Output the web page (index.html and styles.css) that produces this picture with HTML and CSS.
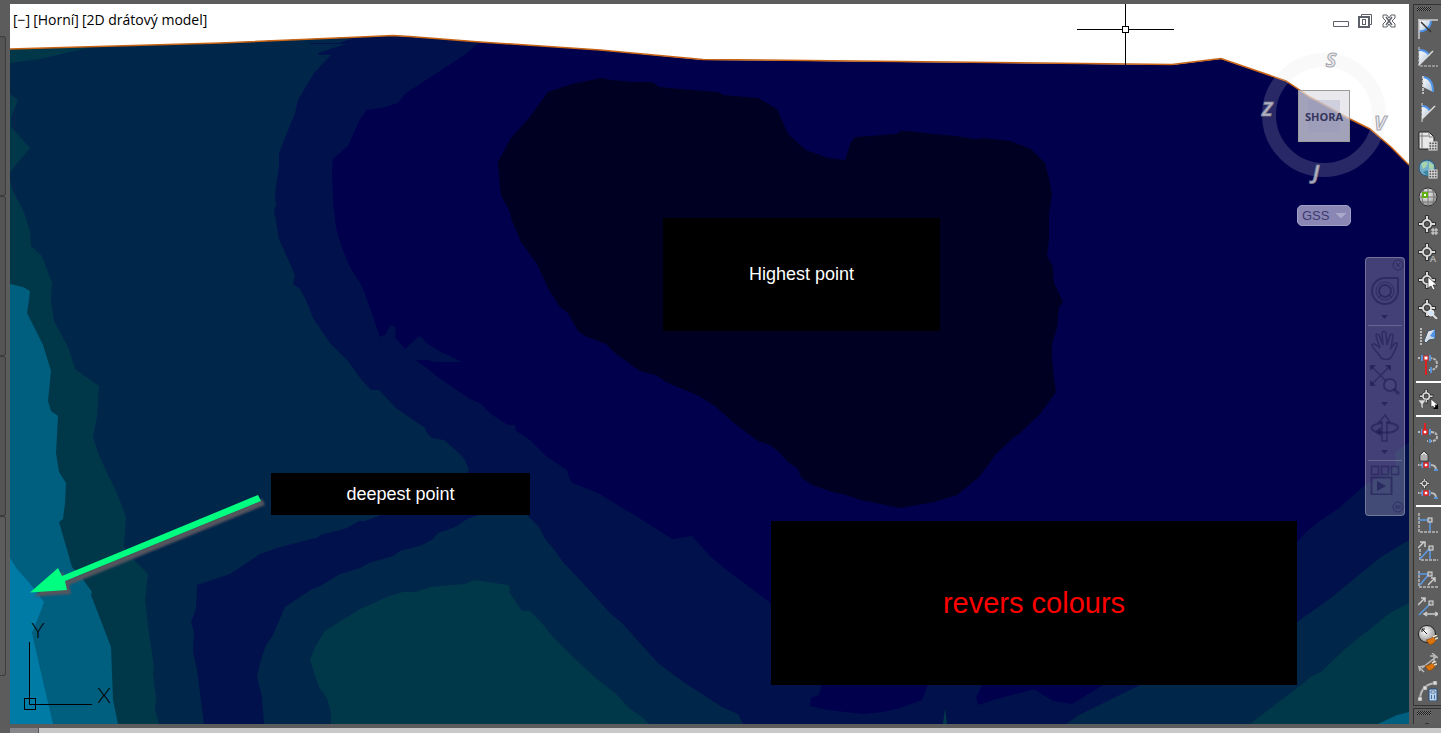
FILE: index.html
```
<!DOCTYPE html>
<html lang="cs">
<head>
    <meta charset="UTF-8">
    <meta name="viewport" content="width=device-width, initial-scale=1.0">
    <title>2D drátový model</title>
    <link rel="stylesheet" href="styles.css">
</head>
<body>
    <!-- Shared icon parts -->
    <svg class="icon-defs" aria-hidden="true">
        <defs>
            <linearGradient id="pale" x1="0" y1="0" x2="1" y2="1">
                <stop offset="0" stop-color="#ffffff"/>
                <stop offset="1" stop-color="#a9bdd6"/>
            </linearGradient>
            <radialGradient id="ball" cx=".4" cy=".35" r=".7">
                <stop offset="0" stop-color="#ffffff"/>
                <stop offset="1" stop-color="#8a8a8a"/>
            </radialGradient>
            <symbol id="target" viewBox="0 0 20 20">
                <g fill="none" stroke="#333" stroke-width="4">
                    <circle cx="9" cy="9" r="4"/>
                    <path d="M9 0v5M9 13v5M0 9h5M13 9h5"/>
                </g>
                <g fill="none" stroke="#d8d8d8" stroke-width="2">
                    <circle cx="9" cy="9" r="4"/>
                    <path d="M9 1v4M9 13v4M1 9h4M13 9h4"/>
                </g>
            </symbol>
            <symbol id="badge" viewBox="0 0 10 10">
                <rect x="1" y="1" width="8" height="8" fill="#555" stroke="#ddd"/>
                <path d="M3.7 1v8M6.3 1v8M1 3.7h8M1 6.3h8" stroke="#ddd" fill="none"/>
            </symbol>
            <symbol id="snap" viewBox="0 0 20 10">
                <path d="M0 4h4" stroke="#bbb" stroke-width="2" stroke-dasharray="1.5 1"/>
                <path d="M4.500 1v6M11.500 1v6" stroke="#5b93d8" stroke-width="2"/>
                <path d="M13 4q5 0 5 5" stroke="#bbb" stroke-width="2" fill="none"/>
                <path d="M16 9h4" stroke="#5b93d8" stroke-width="2"/>
                <rect x="6" y="2" width="4" height="4" fill="#fff" stroke="#e02020" stroke-width="1.500"/>
            </symbol>
            <symbol id="brush" viewBox="0 0 12 10">
                <path d="M0 5l4-1 3-2 3 3-2 3-4 2z" fill="#d9740f" stroke="#8a4200" stroke-width=".6"/>
                <path d="M7 2l4-2M9 4l3-1" stroke="#f0e0c0" stroke-width="1.500"/>
            </symbol>
        </defs>
    </svg>

    <main class="workspace">
        <aside class="palette">
            <div class="palette-tab"></div>
            <div class="palette-tab"></div>
            <div class="palette-tab"></div>
            <div class="palette-tab"></div>
        </aside>

        <section class="viewport">
            <svg class="map" viewBox="10 4 1399 720" preserveAspectRatio="xMinYMin slice">
                <defs>
                    <clipPath id="terrain">
                        <path d="M10 49.500L220 43L360 37L393 36L410 37L480 42L600 50L703 60L900 62L1172 65L1221 59L1286 81L1310 97L1350 119L1370 129L1391 147L1409 165V724H10z"/>
                    </clipPath>
                </defs>
                <g clip-path="url(#terrain)">
                    <rect class="depth-1" x="10" y="4" width="1399" height="720"/>
                    <path class="depth-0" d="M498 162L511 138L529 118L548 92L572 84L601 78L611 80L632 82H653L659 87L680 89L718 92L723 95L758 98L777 109L788 134L806 150L828 158L845 160L851 142L855 137L897 134L900 131H907L943 135L956 136L975 139L983 138L1010 141L1031 149L1045 163L1049 178L1052 194L1049 214V240L1047 256L1053 267L1054 283L1063 302L1059 307L1057 328L1052 344V358L1054 378L1056 392L1040 414L1019 434L1014 437L996 454L979 477L957 495L934 502L900 508L871 502L864 501L843 494L836 493L812 485L801 477L798 469L787 461L780 453L770 445L758 441L734 423L715 406L699 396L666 382L656 375L640 371L615 353L606 344L585 336L578 331L568 313L560 307L549 290L537 264L521 242L511 218L510 212L501 195L500 188z"/>
                    <path class="depth-2" d="M10 4H480V42L463 56L406 93L398 103L382 108L367 110L360 119L348 146L333 159L332 170L333 200L336 228L342 248L350 267L360 283L364 291L380 337L386 334L387 331L391 325L395 327L396 331L395 337L405 349L419 336L424 339L425 342L441 352L448 355L462 362H434L427 360H416L442 380L470 399L480 403L491 414L508 425H515L516 431L530 440L546 456L567 470L570 480L573 483L598 493L644 521L672 539L692 536L711 557L732 574L772 604L822 684L819 695L811 698L810 706L828 710L863 714L883 712L900 708L922 700L928 684H983L976 697L978 705L990 701L1034 689L1053 701L1072 704L1103 685L1297 542L1306 532L1317 523L1339 508L1365 485L1386 473L1396 465L1395 453L1409 442V724H10z"/>
                    <path class="depth-3" d="M10 4H345L352 38L340 43H310V44H346L318 53L319 55H331L314 73L298 100L295 113L279 153V167L275 193L276 205L274 210L279 239L295 275L293 284L300 289L306 300L313 318L330 343L348 361L360 378L371 390H379L396 408L425 428L427 433L432 438L444 440L460 454L465 460L469 470L466 475L420 500L381 515L365 521H359L347 528L340 530L320 535L317 538L307 540L277 548L260 554L230 574L197 585L196 609L191 622L194 632L193 652L197 670L204 724H10z"/>
                    <path class="depth-3" d="M264 724L262 697L257 677L260 663L266 645L272 637L285 607L312 589L320 586L340 574L360 568L369 563L393 556L400 551L422 545L433 539L438 533L455 527L467 519L479 515L500 505L527 515L539 527L545 539L553 548L563 562L580 580L610 613L622 623L658 663L682 681L722 707L738 714L743 724z"/>
                    <path class="depth-3" d="M1409 540L1381 557L1355 578L1331 598L1297 622L1140 685L1079 715L1066 724H1409z"/>
                    <path class="depth-4" d="M10 48L92 47L40 59L10 63zM10 94L18 100L11 117V127L30 148L10 172zM10 180L13 191L24 212L30 232L31 246L42 256L52 283L51 300L54 321L69 349L75 369L99 386L97 417L93 436L98 453L107 473L117 493L126 517L124 547L133 559L148 574L145 600L150 640L154 667L153 673L156 698L155 710L159 724H10z"/>
                    <path class="depth-4" d="M331 724V713L327 698L319 687L310 660L315 647L325 631L360 609L387 597L403 592H415L431 587L465 584L474 580L508 585L510 589L509 592L522 611H530L541 622L553 637L573 657L598 680L615 693L629 708L642 717L649 724zM943 724L945 708L947 724z"/>
                    <path class="depth-4" d="M1409 603L1390 613L1345 649L1321 672L1312 676L1297 688L1250 724H1409z"/>
                    <path class="depth-5" d="M10 284L23 287L30 291L29 300L27 313L43 345L51 371L48 401L51 411L58 416L56 453L59 472L66 483L65 503L63 519L59 522L72 567L82 578L92 592L91 595L111 647L113 700L118 724H10zM1409 712L1397 715L1378 724H1409z"/>
                    <path class="depth-6" d="M10 558L17 569L32 586L44 602L42 608L32 633L42 677L53 724H10z"/>
                </g>
                <path class="outline" d="M10 49L220 43L360 37L393 35.500L410 36.500L480 42L600 50L703 59.500L900 61.500L1172 64.500L1221 58.500L1286 81L1310 97L1350 119L1370 129L1391 147L1409 165"/>

                <!-- Crosshair -->
                <g class="crosshair">
                    <path d="M1077 29.500H1122M1129 29.500H1174M1125.500 4V26M1125.500 33V65"/>
                    <rect x="1122.500" y="26.500" width="6" height="6"/>
                </g>

                <!-- UCS axes -->
                <g class="crosshair">
                    <path d="M29.500 642V704.500H92"/>
                    <rect x="24.500" y="698.500" width="11" height="11"/>
                </g>
                <text class="axis-name" x="38" y="638">Y</text>
                <text class="axis-name" x="104" y="703">X</text>

                <path class="pointer" d="M30 592.500L58 568L62 576L258 495L261 501L65 581L67 590z"/>
            </svg>

            <div class="view-label">
                <button type="button">[−]</button><button type="button">[Horní]</button><button type="button">[2D drátový model]</button>
            </div>

            <div class="note note-highest">Highest point</div>
            <div class="note note-deepest">deepest point</div>
            <div class="note note-revers">revers colours</div>

            <div class="window-buttons">
                <button type="button" aria-label="Minimalizovat">
                    <svg width="16" height="16"><path d="M.5 8.500h15v5H.5z" fill="#fff" stroke="#5d6068"/></svg>
                </button>
                <button type="button" aria-label="Obnovit">
                    <svg width="16" height="16" fill="#fff" stroke="#5d6068"><path d="M4.500 1.500h10v10h-10z"/><path d="M2 4h10v10H2z" stroke-width="2"/><rect x="5.500" y="6.500" width="3" height="5"/></svg>
                </button>
                <button type="button" aria-label="Zavřít">
                    <svg width="16" height="16"><path d="M2 2h4l2 3 2-3h4v3l-3 3 3 3v3h-4l-2-3-2 3H2v-3l3-3-3-3z" fill="#fff" stroke="#5d6068"/><path d="M5 4l6 8M11 4l-6 8" stroke="#5d6068" stroke-width="1.500"/></svg>
                </button>
            </div>

            <div class="view-cube">
                <svg class="cube" width="128" height="130" viewBox="0 0 128 130">
                    <circle class="ring" cx="64" cy="66" r="55"/>
                    <rect class="face" x="38.500" y="41.500" width="51" height="51"/>
                    <rect class="face-inner" x="48" y="51" width="32" height="32"/>
                    <text class="face-name" x="64" y="72">SHORA</text>
                    <text class="side" x="71" y="18">S</text>
                    <text class="side" x="7" y="67">Z</text>
                    <text class="side" x="120" y="81">V</text>
                    <text class="side" x="56" y="130">J</text>
                </svg>
                <select class="ucs-select" aria-label="Souřadnicový systém">
                    <option>GSS</option>
                </select>
            </div>

            <nav class="nav-bar">
                <button type="button" class="nav-corner" aria-label="Zavřít panel">
                    <svg width="12" height="12"><circle cx="6" cy="6" r="5"/><path d="M4 4l4 4M8 4l-4 4"/></svg>
                </button>
                <button type="button" class="nav-wheel" aria-label="Navigační kolo">
                    <svg width="30" height="30"><path d="M15 2h12q1 0 1 1v12A13 13 0 1 1 15 2z" stroke-width="2"/><circle cx="15" cy="15" r="9"/><circle cx="15" cy="15" r="6" stroke-width="2"/><path d="M8 22l3-3M22 22l-3-3"/></svg>
                </button>
                <button type="button" class="nav-more" aria-label="Více"><svg width="8" height="4"><path class="solid" d="M0 0h7L3.500 4z"/></svg></button>
                <hr>
                <button type="button" class="nav-tool" aria-label="Posun">
                    <svg width="30" height="30"><path d="M11 28C9 23 2 18 2 15q2-3 8 3L6 6q0-3 3-1l4 10-1-12q2-3 4 0l1 12 3-10q3-2 3 1l-2 12 4-5q3-1 2 2-2 6-4 9l-2 4q-5 3-10 0z" stroke-width="1.500"/></svg>
                </button>
                <button type="button" class="nav-zoom" aria-label="Zoom">
                    <svg width="30" height="30"><path d="M2 2l17 17M19 2L2 19" stroke-width="1.500"/><path class="solid" d="M0 0h6L0 6zM21 0v6l-6-6zM0 21v-6l6 6z"/><circle class="lens" cx="20" cy="20" r="6" stroke-width="2"/><path d="M24 24l5 5" stroke-width="3"/></svg>
                </button>
                <button type="button" class="nav-more" aria-label="Více"><svg width="8" height="4"><path class="solid" d="M0 0h7L3.500 4z"/></svg></button>
                <button type="button" class="nav-orbit" aria-label="Orbit">
                    <svg width="30" height="30"><path d="M12 28V9H9l6-7 5 7h-3v19z" stroke-width="1.500"/><path d="M12 10C2 11-2 16 5 18M17 10c9 0 14 4 9 7-3 3-10 3-18 2" stroke-width="2"/><path class="solid" d="M4 19l7-5v9z"/></svg>
                </button>
                <button type="button" class="nav-more" aria-label="Více"><svg width="8" height="4"><path class="solid" d="M0 0h7L3.500 4z"/></svg></button>
                <hr>
                <button type="button" class="nav-tool" aria-label="ShowMotion">
                    <svg width="30" height="30"><path d="M1.500 1.500h7v8h-7zM11.500 1.500h7v8h-7zM21.500 1.500h7v8h-7z" stroke-width="1.500"/><path d="M1.500 12.500h20v17h-20z" stroke-width="2"/><path class="solid" d="M7 16l9 5-9 5z"/></svg>
                </button>
                <button type="button" class="nav-corner nav-menu" aria-label="Nabídka">
                    <svg width="12" height="12"><circle cx="6" cy="6" r="5"/><path d="M3 5h6M3 7h6"/></svg>
                </button>
            </nav>
        </section>

        <aside class="toolbars">
            <div class="toolbar">
                <div class="grip"></div>
                <button type="button"><svg viewBox="0 0 20 20"><path d="M1 1h12q0 7-6 10-3 2-6 1z" fill="url(#pale)"/><path d="M13 1q0 7-6 10-3 2-6 1" fill="none" stroke="#4f94ea" stroke-width="2"/><path d="M0 1h20M1 0v20" stroke="#ccc" stroke-width="1.500"/><path d="M3 3l10 10" stroke="#333" stroke-width="1.500"/></svg></button>
                <button type="button"><svg viewBox="0 0 20 20"><path d="M1 3q7 0 11 5l-7 6-4 4z" fill="url(#pale)"/><path d="M1 3q7 0 10 5" fill="none" stroke="#4f94ea" stroke-width="2"/><path d="M1 0v19h19" fill="none" stroke="#ccc" stroke-dasharray="3 1"/><path d="M1 18L15 4" stroke="#ddd" stroke-width="1.500"/></svg></button>
                <button type="button"><svg viewBox="0 0 20 20"><path d="M5 2q9 1 10 15L5 12z" fill="url(#pale)"/><path d="M5 2q10 1 10 15" fill="none" stroke="#4f94ea" stroke-width="2"/><path d="M5 1v18" stroke="#ddd" stroke-width="1.500" stroke-dasharray="3 1"/></svg></button>
                <button type="button"><svg viewBox="0 0 20 20"><path d="M4 3q6 0 8 5l-8 8z" fill="url(#pale)"/><path d="M4 3q5 0 8 5" fill="none" stroke="#4f94ea" stroke-width="2"/><path d="M4 0v20" stroke="#ddd" stroke-dasharray="3 1"/><path d="M4 16L17 3" stroke="#ddd" stroke-width="1.500"/></svg></button>
                <button type="button"><svg viewBox="0 0 20 20"><path d="M1 1h10l5 5v12H1z" fill="#e8e8e8" stroke="#222"/><path d="M11 1v5h5M4 1v17M1 5h9" fill="none" stroke="#777"/><use href="#badge" x="10" y="10" width="10" height="10"/></svg></button>
                <button type="button"><svg viewBox="0 0 20 20"><circle cx="9" cy="9" r="8" fill="#72aec9" stroke="#275877"/><path d="M3 5q4-4 7-1l-2 4-3 2zM11 3l5 3-1 5-4-2z" fill="#a5d4aa"/><path d="M5 13l5-2 2 4-3 2z" fill="#3e87a3"/><use href="#badge" x="10" y="10" width="10" height="10"/></svg></button>
                <button type="button"><svg viewBox="0 0 20 20"><circle cx="10" cy="10" r="9" fill="url(#ball)" stroke="#333"/><path d="M10 1v18M1 10h18M3 5h14M3 15h14M6 2q-4 8 0 16M14 2q4 8 0 16" fill="none" stroke="#777"/><rect x="5" y="6" width="4" height="4" fill="#fff" stroke="#62b012" stroke-width="2"/></svg></button>
                <button type="button"><svg viewBox="0 0 20 20"><use href="#target" width="20" height="20"/><path d="M15 13v7M18 13v7M13 15h7M13 18h7" stroke="#ddd"/></svg></button>
                <button type="button"><svg viewBox="0 0 20 20"><use href="#target" width="20" height="20"/><text class="icon-letter" x="12" y="19">A</text></svg></button>
                <button type="button"><svg viewBox="0 0 20 20"><use href="#target" width="20" height="20"/><path d="M10 6v11l3-2 2 4 2-1-2-4h4z" fill="#fff" stroke="#333" stroke-width=".7"/></svg></button>
                <button type="button"><svg viewBox="0 0 20 20"><use href="#target" width="20" height="20"/><circle cx="13" cy="14" r="3" fill="#cfe3fa" stroke="#eee"/><path d="M15 16l4 4" stroke="#ddd" stroke-width="2"/></svg></button>
                <button type="button"><svg viewBox="0 0 20 20"><path d="M3 1v18" stroke="#bbb" stroke-width="2" stroke-dasharray="2 1"/><path d="M6 14l4-10 7-2v10l-6 1-3 3z" fill="url(#pale)" stroke="#456"/><path d="M17 2v9l-5-2z" fill="#4f94ea"/></svg></button>
                <button type="button"><svg viewBox="0 0 20 20"><path d="M0 3h4" stroke="#bbb" stroke-width="2" stroke-dasharray="2 1"/><path d="M11 3q8 0 8 6t-8 6" fill="none" stroke="#bbb" stroke-width="2" stroke-dasharray="3 1"/><path d="M4 0v6M12 0v6M13 12v6" stroke="#5b93d8" stroke-width="2"/><path d="M8 4v16" stroke="#e02020" stroke-width="2"/><rect x="6" y="1" width="4" height="4" fill="#fff" stroke="#e02020"/></svg></button>
                <hr>
                <button type="button"><svg viewBox="0 0 20 20"><use href="#target" x="1" y="0" width="16" height="16"/><path d="M0 11h8l-3 4v5l-2-2v-3z" fill="#ddd" stroke="#555" stroke-width=".6"/><path d="M13 10v8l2-1 2 3 1-1-1-3h3z" fill="#fff" stroke="#222" stroke-width=".6"/><path d="M20 15v5h-5z" fill="#000"/></svg></button>
                <hr>
                <button type="button"><svg viewBox="0 0 20 20"><path d="M0 9h4" stroke="#bbb" stroke-width="2" stroke-dasharray="2 1"/><path d="M13 9q6 0 6 5t-10 4" fill="none" stroke="#bbb" stroke-width="2" stroke-dasharray="3 1"/><path d="M4 6v6M12 6v6M12 16v4" stroke="#5b93d8" stroke-width="2"/><path d="M7 0v8" stroke="#e02020" stroke-width="2"/><rect x="5" y="7" width="4" height="4" fill="#fff" stroke="#e02020" stroke-width="1.500"/></svg></button>
                <button type="button"><svg viewBox="0 0 20 20"><path d="M2 4l4-4 4 4v6H2z" fill="#d8d8d8" stroke="#333"/><path d="M4 4v5M6 3v6M8 4v5" stroke="#888"/><use href="#snap" x="0" y="10" width="20" height="10"/></svg></button>
                <button type="button"><svg viewBox="0 0 20 20"><use href="#target" x="1" y="-1" width="12" height="12"/><use href="#snap" x="0" y="10" width="20" height="10"/></svg></button>
                <hr>
                <button type="button"><svg viewBox="0 0 20 20"><path d="M1 0v19h19" fill="none" stroke="#bbb" stroke-dasharray="3 1" stroke-width="1.500"/><path d="M1 7h11v11" fill="none" stroke="#5b9be6" stroke-width="1.500"/><rect x="10" y="5" width="4" height="4" fill="#777" stroke="#ddd"/></svg></button>
                <button type="button"><svg viewBox="0 0 20 20"><path d="M2 8v11h18" fill="none" stroke="#bbb" stroke-dasharray="3 1" stroke-width="1.500"/><path d="M2 18L12 7v11" fill="none" stroke="#5b9be6" stroke-width="1.500"/><path d="M0 7l6-6M2 1h5v5" fill="none" stroke="#ccc" stroke-width="1.500"/><rect x="11" y="5" width="4" height="4" fill="#777" stroke="#ddd"/></svg></button>
                <button type="button"><svg viewBox="0 0 20 20"><path d="M1 2v16h19" fill="none" stroke="#bbb" stroke-dasharray="3 1" stroke-width="1.500"/><path d="M0 5h11L2 16" fill="none" stroke="#5b9be6" stroke-width="1.500"/><path d="M10 16l7-7M13 9h4v4" fill="none" stroke="#ccc" stroke-width="1.500"/><rect x="10" y="3" width="4" height="4" fill="#777" stroke="#ddd"/></svg></button>
                <button type="button"><svg viewBox="0 0 20 20"><path d="M0 8l7-7M3 1h4v4M7 17h12M9 15l-3 2 3 2M17 15l3 2-3 2" fill="none" stroke="#ccc" stroke-width="1.500"/><path d="M1 18L12 7" stroke="#5b9be6" stroke-width="1.500"/><rect x="11" y="4" width="4" height="4" fill="#777" stroke="#ddd"/></svg></button>
                <button type="button"><svg viewBox="0 0 20 20"><circle cx="9" cy="9" r="8.500" fill="url(#ball)" stroke="#222"/><path d="M9 9L4 4M4 7V4h3" fill="none" stroke="#222"/><use href="#brush" x="8" y="10" width="12" height="10"/></svg></button>
                <button type="button"><svg viewBox="0 0 20 20"><path d="M0 13l6 6M6 13l-5 1 1 4M4 15l14-11M12 3h4v5M14 0l6 5" fill="none" stroke="#bbb" stroke-width="1.500"/><use href="#brush" x="7" y="8" width="12" height="10"/></svg></button>
                <button type="button"><svg viewBox="0 0 20 20"><path d="M2 18Q3 3 18 2" fill="none" stroke="#bbb" stroke-width="2"/><path d="M0 16h4v4H0zM5 5h4v4H5zM15 0h4v4h-4z" fill="#ddd" stroke="#777" stroke-width=".6"/><rect x="11" y="8" width="8" height="12" rx="1" fill="#b9d2ee" stroke="#224b7d"/><path d="M13 10h4v2h-4z" fill="#fff" stroke="#224b7d" stroke-width=".7"/><path d="M13 15h1M16 15h1M13 17h1M16 17h1" stroke="#224b7d" stroke-width="1.500"/></svg></button>
            </div>
            <div class="toolbar toolbar-next">
                <div class="grip"></div>
                <button type="button"><svg viewBox="0 0 20 20"><use href="#target" width="20" height="20"/></svg></button>
            </div>
        </aside>
    </main>

    <footer class="scroll-strip">
        <div class="scroll-thumb"></div>
    </footer>
</body>
</html>
```
FILE: styles.css
```
* {
    margin: 0;
    padding: 0;
    box-sizing: border-box;
}

body {
    font-family: "Open Sans", "Noto Sans", sans-serif;
    background: #5c5c5c;
    height: 100vh;
    padding-top: 4px;
    display: flex;
    flex-direction: column;
    overflow: hidden;
}

button {
    background: none;
    border: none;
    font: inherit;
    color: inherit;
    cursor: pointer;
}

svg {
    display: block;
}

.icon-defs {
    position: absolute;
    width: 0;
    height: 0;
}

.workspace {
    flex: 1;
    display: flex;
    min-height: 0;
}

/* Left palette */
.palette {
    width: 10px;
    padding-top: 32px;
}

.palette-tab {
    width: 6px;
    height: 160px;
    background: #545454;
    border: 1px solid #3c3c3c;
    border-left: none;
    border-radius: 0 3px 3px 0;
}

.palette-tab:last-child {
    background: #5c5c5c;
}

/* Drawing area */
.viewport {
    flex: 1;
    position: relative;
    background: #fff;
    overflow: hidden;
}

.map {
    width: 100%;
    height: 100%;
}

.depth-0 { fill: #000022; }
.depth-1 { fill: #00004c; }
.depth-2 { fill: #00114c; }
.depth-3 { fill: #00264a; }
.depth-4 { fill: #00384a; }
.depth-5 { fill: #005f7f; }
.depth-6 { fill: #007ba5; }

.outline {
    fill: none;
    stroke: #c86414;
    stroke-width: 1.5;
}

.crosshair {
    fill: none;
    stroke: #000;
}

.axis-name {
    font-family: Lato, sans-serif;
    font-weight: 300;
    font-size: 22px;
    text-anchor: middle;
}

.pointer {
    fill: #00ff80;
    filter: drop-shadow(4px 4px 1px #55555e);
}

.view-label {
    position: absolute;
    top: 6px;
    left: 3px;
    display: flex;
    gap: 3px;
    font-size: 14px;
    line-height: 20px;
    color: #000;
    white-space: nowrap;
}

.note {
    position: absolute;
    display: flex;
    align-items: center;
    justify-content: center;
    background: #000;
    color: #fff;
    font-family: "Liberation Sans", Arial, sans-serif;
    font-size: 18px;
}

.note-highest {
    top: 214px;
    left: 653px;
    width: 277px;
    height: 113px;
}

.note-deepest {
    top: 469px;
    left: 261px;
    width: 259px;
    height: 42px;
}

.note-revers {
    top: 517px;
    left: 761px;
    width: 526px;
    height: 164px;
    color: #f00;
    font-size: 29px;
}

.window-buttons {
    position: absolute;
    top: 9px;
    right: 12px;
    display: flex;
    gap: 8px;
}

/* View cube */
.view-cube {
    position: absolute;
    top: 45px;
    right: 21px;
    display: flex;
    flex-direction: column;
    align-items: center;
    gap: 26px;
}

.cube {
    overflow: visible;
}

.ring {
    fill: none;
    stroke: rgba(220, 220, 230, 0.18);
    stroke-width: 14;
}

.face {
    fill: rgba(225, 225, 230, 0.72);
    stroke: #9a9a9a;
}

.face-inner {
    fill: rgba(150, 150, 190, 0.3);
}

.face-name {
    font-family: "Open Sans", sans-serif;
    font-weight: 700;
    font-size: 11px;
    fill: #34345c;
    text-anchor: middle;
}

.side {
    font-family: "Open Sans", sans-serif;
    font-weight: 700;
    font-style: italic;
    font-size: 20px;
    fill: rgba(225, 225, 232, 0.75);
    stroke: rgba(130, 130, 140, 0.7);
    stroke-width: 1;
    text-anchor: middle;
}

.ucs-select {
    appearance: none;
    width: 54px;
    height: 21px;
    padding-left: 4px;
    border: 1px solid #a3a0c6;
    border-radius: 5px;
    color: #3d3a70;
    background:
        linear-gradient(to bottom left, #aaa8c8 50%, transparent 50%) 38px 7px / 5px 5px no-repeat,
        linear-gradient(to bottom right, #aaa8c8 50%, transparent 50%) 43px 7px / 5px 5px no-repeat,
        #8a87b4;
    font-family: "Liberation Sans", Arial, sans-serif;
    font-size: 13px;
}

/* Navigation bar */
.nav-bar {
    position: absolute;
    top: 253px;
    right: 4px;
    width: 40px;
    height: 259px;
    padding-top: 1px;
    display: flex;
    flex-direction: column;
    background: rgba(165, 160, 182, 0.4);
    border: 1px solid rgba(190, 190, 200, 0.4);
    border-radius: 4px;
}

.nav-bar button {
    display: flex;
    align-items: center;
    justify-content: center;
}

.nav-bar svg {
    fill: none;
    stroke: rgba(25, 22, 80, 0.5);
}

.nav-bar .solid {
    fill: rgba(25, 22, 80, 0.6);
    stroke: none;
}

.nav-bar .lens {
    fill: #46437a;
}

.nav-bar hr {
    height: 1px;
    margin: 2px;
    border: none;
    background: rgba(190, 190, 210, 0.3);
}

.nav-bar .nav-corner {
    height: 12px;
    justify-content: flex-end;
}

.nav-bar .nav-menu {
    margin-top: auto;
    margin-bottom: 2px;
}

.nav-wheel {
    height: 40px;
}

.nav-more {
    height: 12px;
}

.nav-tool {
    height: 34px;
}

.nav-zoom,
.nav-orbit {
    height: 36px;
}

/* Right toolbars */
.toolbars {
    width: 32px;
    padding-left: 4px;
    display: flex;
    flex-direction: column;
    gap: 2px;
    overflow: hidden;
}

.toolbar {
    flex: none;
    border: 1px solid #333;
    border-width: 1px 0 1px 1px;
    background: #5e5e5e;
}

.grip {
    width: 14px;
    height: 4px;
    margin: 2px 0 4px 3px;
    background: repeating-conic-gradient(#1c1c1c 0 25%, #777 0 50%) 0 0 / 2px 2px;
}

.toolbar button {
    display: block;
    width: 28px;
    height: 28px;
    padding: 4px;
}

.toolbar button svg {
    width: 20px;
    height: 20px;
}

.toolbar hr {
    height: 2px;
    margin: 2px 0 2px 2px;
    border: none;
    background: #fff;
}

.icon-letter {
    font-family: "Liberation Sans", Arial, sans-serif;
    font-size: 9px;
    fill: #ddd;
}

/* Bottom scroll strip */
.scroll-strip {
    height: 9px;
    margin-left: 10px;
    border-top: 4px solid #5c5c5c;
    background: #c8c8c8;
}

.scroll-thumb {
    width: 29px;
    height: 5px;
    background: #87878b;
    border-right: 1px solid #555;
}
```
